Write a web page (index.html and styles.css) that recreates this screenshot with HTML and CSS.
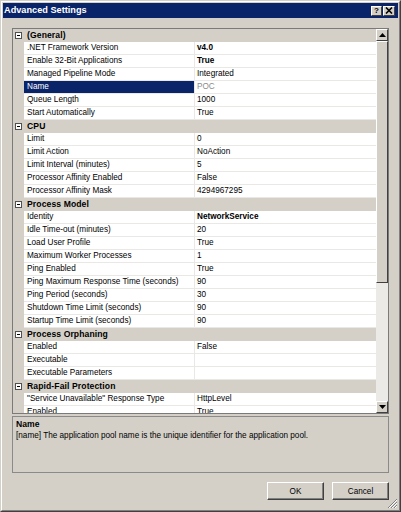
FILE: index.html
```html
<!DOCTYPE html>
<html>
<head>
<meta charset="utf-8">
<link rel="stylesheet" href="styles.css">
</head>
<body>
<div class="window">
  <div class="frame">
    <div class="titlebar">
      <span class="title">Advanced Settings</span>
      <div class="tbtns">
        <span class="tbtn help">?</span>
        <span class="tbtn close"><svg width="8" height="7" viewBox="0 0 8 7"><path d="M1 0.5 L7 6.5 M7 0.5 L1 6.5" stroke="#000" stroke-width="1.6"/></svg></span>
      </div>
    </div>
    <div class="client">
      <div class="grid">
        <div class="rows">
          <div class="cat"><span class="m"><span class="box"></span></span><span class="ct">(General)</span></div>
          <div class="row"><span class="m"></span><span class="n">.NET Framework Version</span><span class="v b">v4.0</span></div>
          <div class="row"><span class="m"></span><span class="n">Enable 32-Bit Applications</span><span class="v b">True</span></div>
          <div class="row"><span class="m"></span><span class="n">Managed Pipeline Mode</span><span class="v">Integrated</span></div>
          <div class="row sel"><span class="m"></span><span class="n">Name</span><span class="v">POC</span></div>
          <div class="row"><span class="m"></span><span class="n">Queue Length</span><span class="v">1000</span></div>
          <div class="row"><span class="m"></span><span class="n">Start Automatically</span><span class="v">True</span></div>
          <div class="cat"><span class="m"><span class="box"></span></span><span class="ct">CPU</span></div>
          <div class="row"><span class="m"></span><span class="n">Limit</span><span class="v">0</span></div>
          <div class="row"><span class="m"></span><span class="n">Limit Action</span><span class="v">NoAction</span></div>
          <div class="row"><span class="m"></span><span class="n">Limit Interval (minutes)</span><span class="v">5</span></div>
          <div class="row"><span class="m"></span><span class="n">Processor Affinity Enabled</span><span class="v">False</span></div>
          <div class="row"><span class="m"></span><span class="n">Processor Affinity Mask</span><span class="v">4294967295</span></div>
          <div class="cat"><span class="m"><span class="box"></span></span><span class="ct">Process Model</span></div>
          <div class="row"><span class="m"></span><span class="n">Identity</span><span class="v b">NetworkService</span></div>
          <div class="row"><span class="m"></span><span class="n">Idle Time-out (minutes)</span><span class="v">20</span></div>
          <div class="row"><span class="m"></span><span class="n">Load User Profile</span><span class="v">True</span></div>
          <div class="row"><span class="m"></span><span class="n">Maximum Worker Processes</span><span class="v">1</span></div>
          <div class="row"><span class="m"></span><span class="n">Ping Enabled</span><span class="v">True</span></div>
          <div class="row"><span class="m"></span><span class="n">Ping Maximum Response Time (seconds)</span><span class="v">90</span></div>
          <div class="row"><span class="m"></span><span class="n">Ping Period (seconds)</span><span class="v">30</span></div>
          <div class="row"><span class="m"></span><span class="n">Shutdown Time Limit (seconds)</span><span class="v">90</span></div>
          <div class="row"><span class="m"></span><span class="n">Startup Time Limit (seconds)</span><span class="v">90</span></div>
          <div class="cat"><span class="m"><span class="box"></span></span><span class="ct">Process Orphaning</span></div>
          <div class="row"><span class="m"></span><span class="n">Enabled</span><span class="v">False</span></div>
          <div class="row"><span class="m"></span><span class="n">Executable</span><span class="v"></span></div>
          <div class="row"><span class="m"></span><span class="n">Executable Parameters</span><span class="v"></span></div>
          <div class="cat"><span class="m"><span class="box"></span></span><span class="ct">Rapid-Fail Protection</span></div>
          <div class="row"><span class="m"></span><span class="n">"Service Unavailable" Response Type</span><span class="v">HttpLevel</span></div>
          <div class="row"><span class="m"></span><span class="n">Enabled</span><span class="v">True</span></div>
        </div>
        <div class="sb">
          <span class="sbtn"><svg width="7" height="4" viewBox="0 0 7 4"><path d="M3.5 0 L7 4 L0 4 Z" fill="#000"/></svg></span>
          <span class="thumb"></span>
          <span class="track"></span>
          <span class="sbtn"><svg width="7" height="4" viewBox="0 0 7 4"><path d="M0 0 L7 0 L3.5 4 Z" fill="#000"/></svg></span>
        </div>
      </div>
      <div class="desc">
        <div class="dt">Name</div>
        <div class="dd">[name] The application pool name is the unique identifier for the application pool.</div>
      </div>
      <div class="buttons">
        <span class="btn">OK</span>
        <span class="btn">Cancel</span>
      </div>
    </div>
  </div>
  <svg class="grip" width="11" height="11" viewBox="0 0 11 11">
    <path d="M10 1 L1 10 M10 4 L4 10 M10 7 L7 10" stroke="#808080" stroke-width="1"/>
    <path d="M10 2 L2 10 M10 5 L5 10 M10 8 L8 10" stroke="#ffffff" stroke-width="1"/>
  </svg>
</div>
</body>
</html>
```
FILE: styles.css
```css
html, body {
  margin: 0;
  padding: 0;
  background: #d4d0c8;
}
body {
  font-family: "Liberation Sans", Arial, sans-serif;
  font-size: 8.2px;
  color: #000;
}
.window {
  position: relative;
  width: 401px;
  height: 512px;
  box-sizing: border-box;
  border: 1px solid;
  border-color: #d4d0c8 #404040 #404040 #d4d0c8;
  background: #d4d0c8;
}
.frame {
  height: 100%;
  box-sizing: border-box;
  border: 1px solid;
  border-color: #ffffff #808080 #808080 #ffffff;
  padding: 1px;
  display: flex;
  flex-direction: column;
}
.titlebar {
  height: 15px;
  background: #0a246a;
  display: flex;
  align-items: center;
  justify-content: space-between;
  padding-left: 1px;
  padding-right: 3px;
  flex: none;
}
.title {
  color: #fff;
  font-weight: bold;
  font-size: 9.2px;
  line-height: 15px;
}
.tbtns {
  display: flex;
  gap: 1px;
}
.tbtn {
  width: 11px;
  height: 10px;
  box-sizing: border-box;
  background: #d4d0c8;
  border: 1px solid;
  border-color: #ffffff #404040 #404040 #ffffff;
  display: flex;
  align-items: center;
  justify-content: center;
  font-weight: bold;
  font-size: 8px;
  line-height: 8px;
}
.close {
  width: 12px;
}
.client {
  flex: 1;
  display: flex;
  flex-direction: column;
  padding: 10px 9px 0 9px;
}
.grid {
  height: 386px;
  box-sizing: border-box;
  border: 1px solid #7a7a7a;
  display: flex;
  flex: none;
  background: #d4d0c8;
}
.rows {
  flex: 1;
  overflow: hidden;
  display: flex;
  flex-direction: column;
}
.row, .cat {
  height: 13px;
  display: flex;
  flex: none;
}
.m {
  width: 11px;
  flex: none;
  background: #d4d0c8;
  display: flex;
  align-items: center;
  padding-left: 2px;
  box-sizing: border-box;
}
.box {
  width: 7px;
  height: 7px;
  box-sizing: border-box;
  border: 1px solid #505050;
  background: #fff;
  display: flex;
  align-items: center;
  justify-content: center;
}
.box::after {
  content: "";
  width: 3px;
  height: 1px;
  background: #000;
}
.cat {
  background: #d4d0c8;
}
.ct {
  font-weight: bold;
  font-size: 8.6px;
  letter-spacing: 0.1px;
  line-height: 13px;
  padding-left: 3px;
}
.n {
  width: 171px;
  flex: none;
  box-sizing: border-box;
  background: #fff;
  border-right: 1px solid #e9e8e4;
  border-bottom: 1px solid #e9e8e4;
  padding-left: 3px;
  line-height: 12px;
  white-space: nowrap;
  overflow: hidden;
}
.v {
  flex: 1;
  background: #fff;
  border-bottom: 1px solid #e9e8e4;
  padding-left: 2px;
  line-height: 12px;
  white-space: nowrap;
}
.b {
  font-weight: bold;
}
.sel .n {
  background: #0a246a;
  color: #fff;
}
.sel .v {
  color: #8a8a8a;
}
.sb {
  width: 12px;
  flex: none;
  display: flex;
  flex-direction: column;
  background: #eceae6;
}
.sbtn {
  height: 12px;
  flex: none;
  box-sizing: border-box;
  background: #d4d0c8;
  border: 1px solid;
  border-color: #ffffff #404040 #404040 #ffffff;
  display: flex;
  align-items: center;
  justify-content: center;
}
.thumb {
  height: 242px;
  flex: none;
  box-sizing: border-box;
  background: #d4d0c8;
  border: 1px solid;
  border-color: #ffffff #404040 #404040 #ffffff;
}
.track {
  flex: 1;
}
.desc {
  margin-top: 2px;
  height: 57px;
  box-sizing: border-box;
  border: 1px solid #8a8a8a;
  padding: 2px 3px;
  flex: none;
}
.dt {
  font-weight: bold;
  font-size: 8.6px;
  line-height: 11px;
}
.dd {
  line-height: 12px;
}
.buttons {
  margin-top: 9px;
  display: flex;
  justify-content: flex-end;
  gap: 8px;
}
.btn {
  width: 57px;
  height: 18px;
  box-sizing: border-box;
  border: 1px solid;
  border-color: #ffffff #404040 #404040 #ffffff;
  box-shadow: inset -1px -1px 0 #808080;
  display: flex;
  align-items: center;
  justify-content: center;
}
.grip {
  position: absolute;
  right: 2px;
  bottom: 2px;
}
```
